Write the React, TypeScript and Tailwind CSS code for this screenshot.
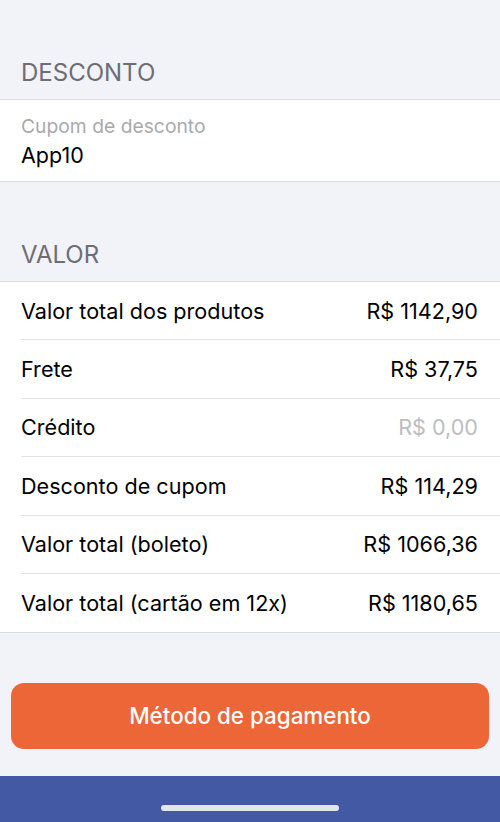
import React from "react"

const rows = [
  { label: "Valor total dos produtos", value: "R$ 1142,90" },
  { label: "Frete", value: "R$ 37,75" },
  { label: "Crédito", value: "R$ 0,00", muted: true },
  { label: "Desconto de cupom", value: "R$ 114,29" },
  { label: "Valor total (boleto)", value: "R$ 1066,36" },
  { label: "Valor total (cartão em 12x)", value: "R$ 1180,65" },
]

const App: React.FC = () => {
  return (
    <div
      className="flex h-[822px] w-[500px] flex-col bg-[#f2f2f9] text-black"
      style={{ fontFamily: "Inter, 'Noto Sans', sans-serif" }}
    >
      <div className="flex h-[99px] items-end px-[21px] pb-[14px]">
        <h2 className="text-[24px] leading-none text-[#6d6d72]">DESCONTO</h2>
      </div>
      <div className="flex h-[83px] flex-col justify-center border-y border-[#dcdce0] bg-white px-[21px] pt-[1px]">
        <span className="text-[19.3px] leading-[27px] text-[#a9a9ad]">Cupom de desconto</span>
        <span className="text-[21.5px] leading-[30px]">App10</span>
      </div>
      <div className="flex h-[99px] items-end px-[21px] pb-[14px]">
        <h2 className="text-[24px] leading-none text-[#6d6d72]">VALOR</h2>
      </div>
      <div className="border-y border-[#dcdce0] bg-white">
        {rows.map((row, i) => (
          <div key={row.label} className="pl-[21px]">
            <div
              className={
                "flex h-[58.4px] items-center justify-between pr-[22px] text-[21.6px] " +
                (i < rows.length - 1 ? "border-b border-[#e2e2e6]" : "")
              }
            >
              <span>{row.label}</span>
              <span className={row.muted ? "text-[#bdbdc1]" : ""}>{row.value}</span>
            </div>
          </div>
        ))}
      </div>
      <div className="flex flex-1 flex-col justify-end px-[11px] pb-[27px]">
        <button className="h-[66px] w-full rounded-[13px] bg-[#ec6638] text-[22.4px] font-medium text-white">
          Método de pagamento
        </button>
      </div>
      <div className="flex h-[46px] items-end justify-center bg-[#4459a4] pb-[11px]">
        <div className="h-[6px] w-[178px] rounded-full bg-[#e4e6ee]" />
      </div>
    </div>
  )
}

export default App
